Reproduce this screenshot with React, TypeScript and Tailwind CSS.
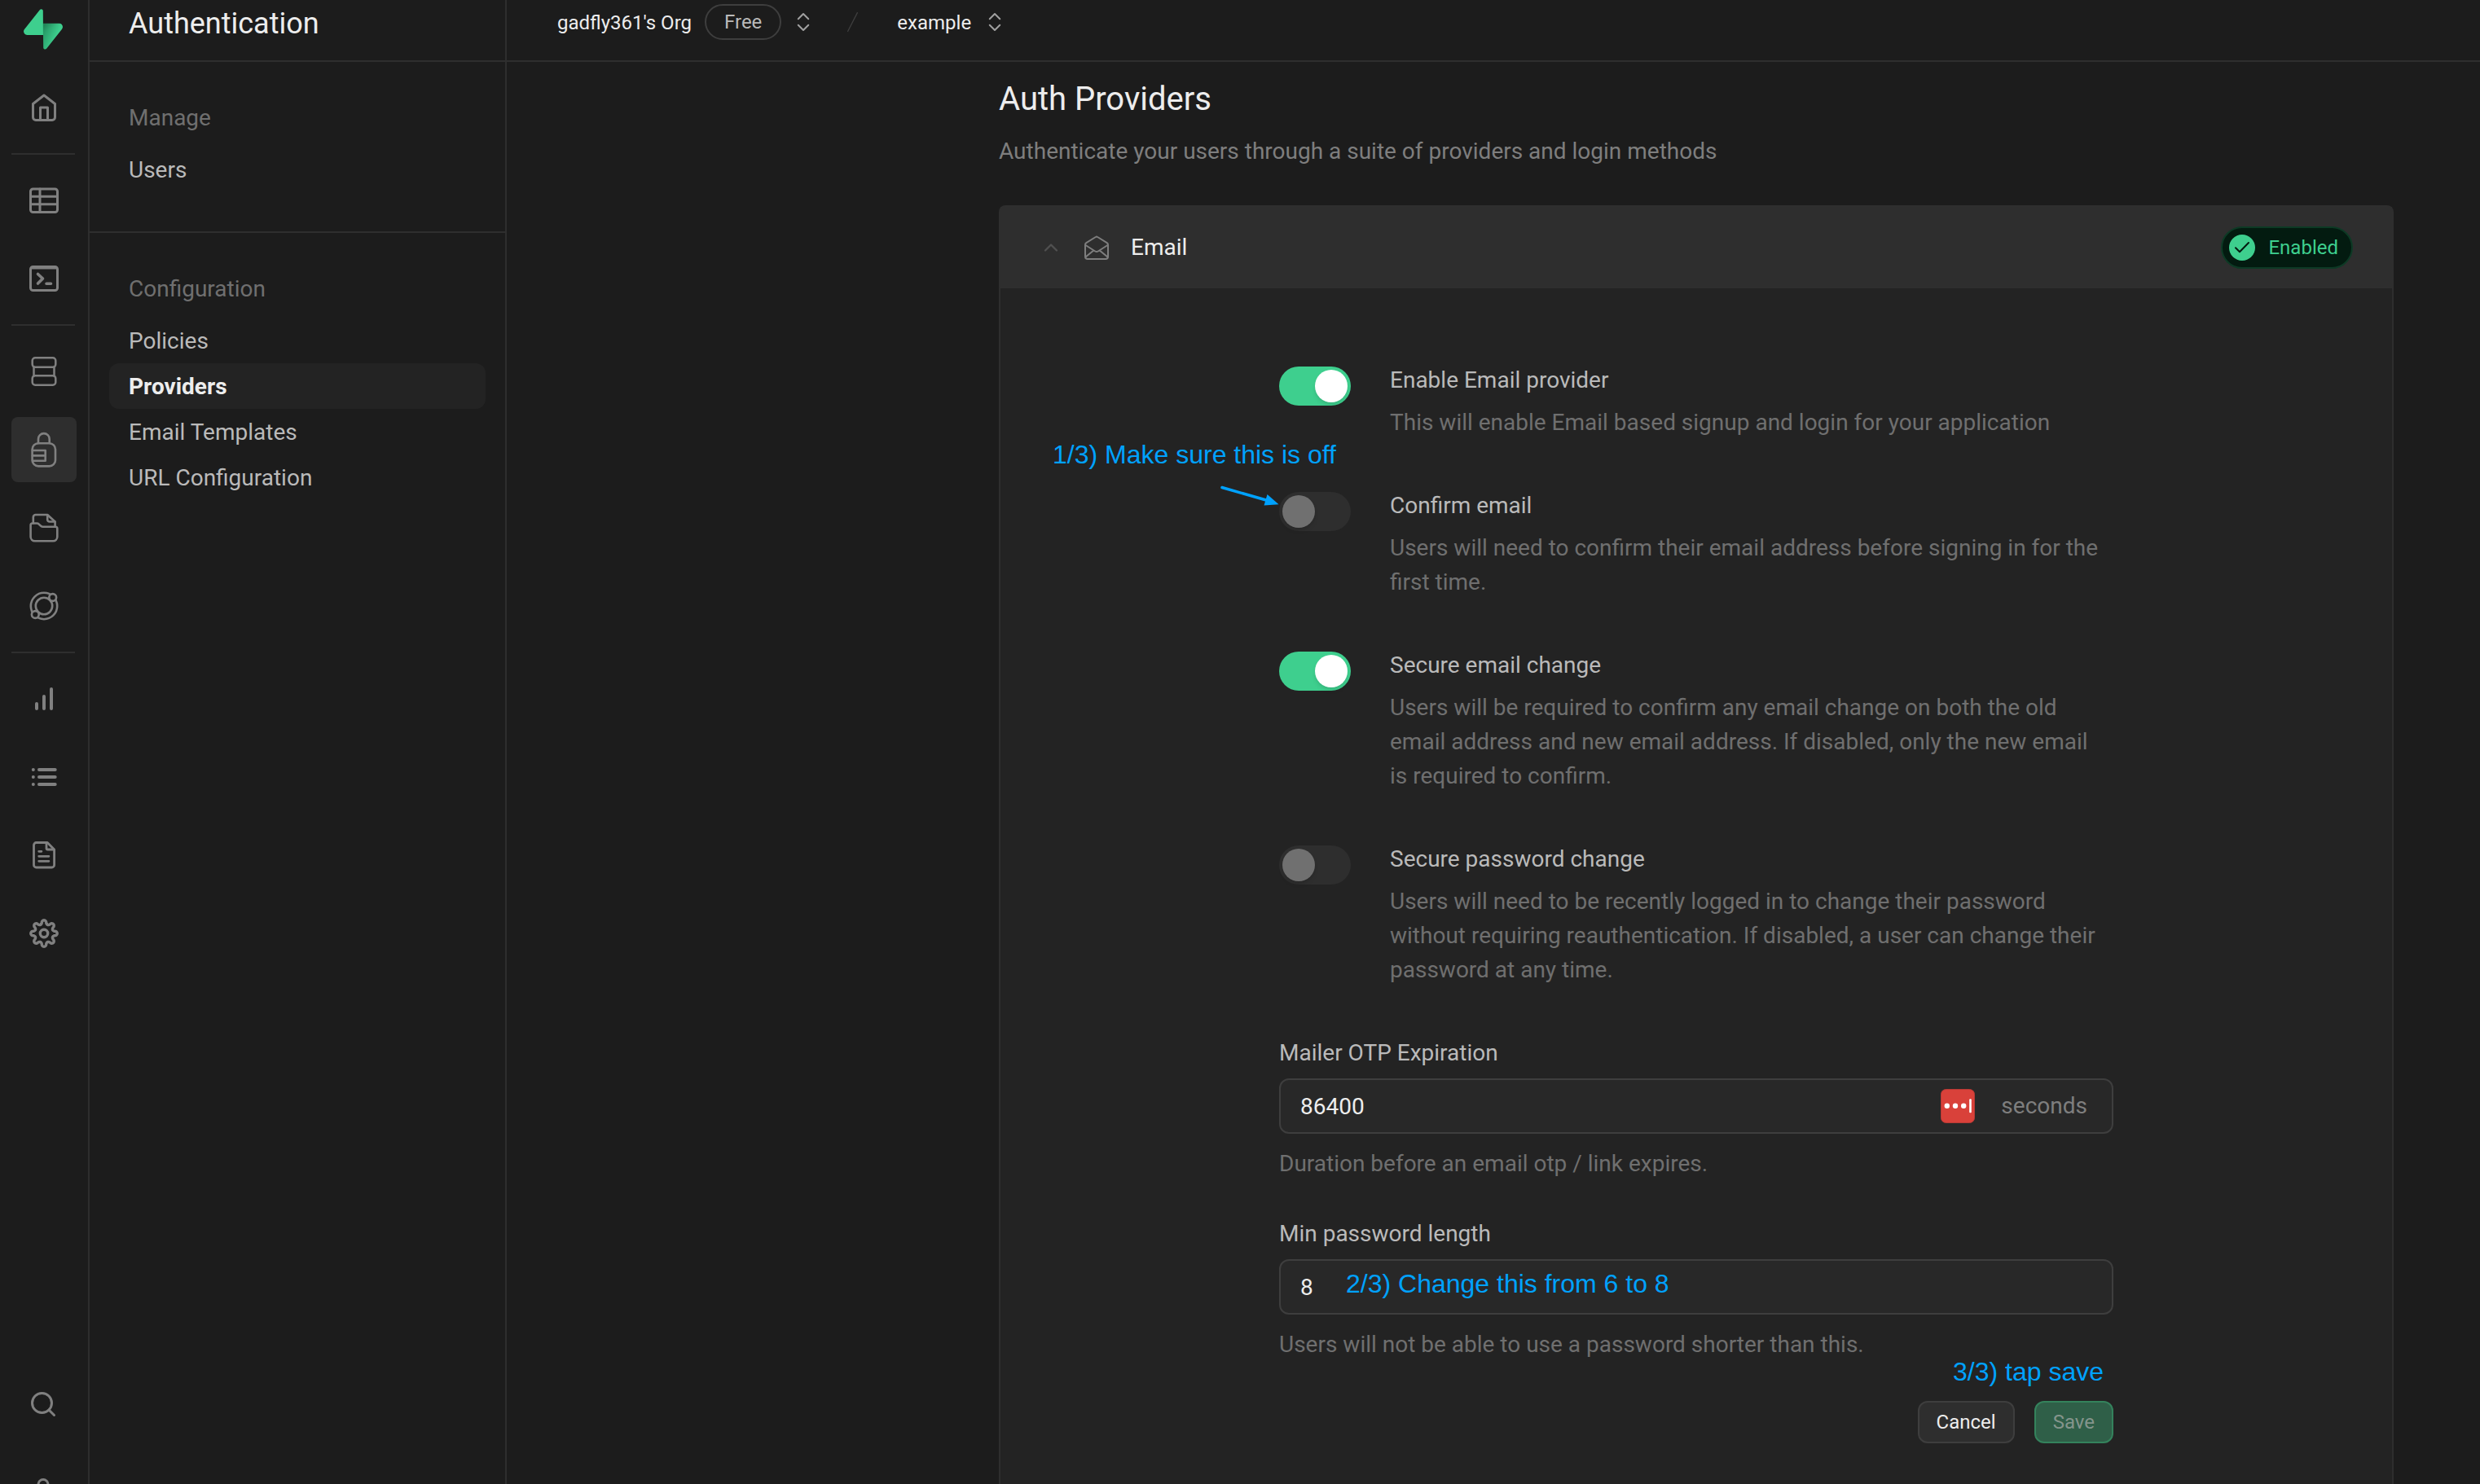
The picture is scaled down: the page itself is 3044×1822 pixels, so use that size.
import type { ReactNode } from "react";
import { ChevronUp, ChevronsUpDown, Search, User } from "lucide-react";

function Icon({ children, width = 3 }: { children: ReactNode; width?: number }) {
  return (
    <svg
      viewBox="0 0 44 44"
      className="size-11"
      fill="none"
      stroke="currentColor"
      strokeWidth={width}
      strokeLinecap="round"
      strokeLinejoin="round"
      aria-hidden="true"
    >
      {children}
    </svg>
  );
}

function gearPath() {
  const points: string[] = [];
  for (let i = 0; i < 240; i++) {
    const a = (i / 240) * Math.PI * 2;
    const c = Math.cos(8 * a);
    const r = 13.8 + 2.4 * Math.sign(c) * Math.pow(Math.abs(c), 0.6);
    points.push((22 + r * Math.cos(a)).toFixed(2) + " " + (22 + r * Math.sin(a)).toFixed(2));
  }
  return "M" + points.join("L") + "Z";
}

const railGroups: { label: string; active?: boolean; icon: ReactNode }[][] = [
  [
    {
      label: "Home",
      icon: (
        <Icon>
          <path d="M8.5 17.5 22 7l13.5 10.5V34a3.5 3.5 0 0 1-3.5 3.5H12A3.5 3.5 0 0 1 8.5 34Z" />
          <path d="M17.5 37.5V22h9v15.5" />
        </Icon>
      ),
    },
  ],
  [
    {
      label: "Table Editor",
      icon: (
        <Icon>
          <rect x="5.5" y="8" width="33" height="28.5" rx="3" />
          <path d="M17 8v28.5M5.5 17.3h33M5.5 26.7h33" />
        </Icon>
      ),
    },
    {
      label: "SQL Editor",
      icon: (
        <Icon>
          <rect x="5.5" y="7.5" width="33" height="29" rx="3" />
          <path d="M6.500 9h31" />
          <path d="m14.500 16.500 6 5.500-6 6M25 28.300h5.500" strokeWidth="3.6" />
        </Icon>
      ),
    },
  ],
  [
    {
      label: "Database",
      icon: (
        <Icon width={2.5}>
          <rect x="7.7" y="5.3" width="28.6" height="11.5" rx="3.5" />
          <rect x="7.7" y="27.2" width="28.6" height="11.5" rx="3.5" />
          <path d="M9.500 17v10.200M34.500 17v10.200" />
        </Icon>
      ),
    },
    {
      label: "Authentication",
      active: true,
      icon: (
        <Icon width={2.6}>
          <rect x="7.6" y="14.2" width="28.4" height="28.2" rx="7.5" />
          <path d="M15 14V9a6.850 6.850 0 0 1 13.700 0v5" />
          <path d="M8 23h15.700v12.700H8M8 29.400h15.700" />
        </Icon>
      ),
    },
    {
      label: "Storage",
      icon: (
        <Icon width={2.6}>
          <path d="M5.600 18.700a2.200 2.200 0 0 1 2.200-2.200h5.400c1 0 1.900.4 2.600 1.100l1.600 1.600c.8.9 1.900 1.500 3.100 1.500h15.600a2.200 2.200 0 0 1 2.200 2.200v10.200a5.200 5.200 0 0 1-5.200 5.200H10.800a5.200 5.200 0 0 1-5.200-5.200Z" />
          <path d="M8.800 16.200V8.900a2.900 2.900 0 0 1 2.900-2.900h14.500l9.400 8.500v6" />
          <path d="M26.200 6.500v5.400a2.600 2.600 0 0 0 2.600 2.600h6.500" />
        </Icon>
      ),
    },
    {
      label: "Edge Functions",
      icon: (
        <Icon width={2.6}>
          <circle cx="22" cy="22" r="16.2" />
          <circle cx="22" cy="22" r="10.2" />
          <circle cx="32.7" cy="11.5" r="4.4" fill="#1c1c1c" />
          <circle cx="11.3" cy="32.5" r="4.4" fill="#1c1c1c" />
        </Icon>
      ),
    },
  ],
  [
    {
      label: "Reports",
      icon: (
        <Icon width={4}>
          <path d="M13 28v6M22 19v15M31 10v24" />
        </Icon>
      ),
    },
    {
      label: "Logs",
      icon: (
        <Icon width={4}>
          <path d="M8.800 13h.01M8.800 22h.01M8.800 31h.01M16 13h19.700M16 22h19.700M16 31h19.700" />
        </Icon>
      ),
    },
    {
      label: "API Docs",
      icon: (
        <Icon width={2.8}>
          <path d="M12.500 6.500h13.700l8.400 8.400V34a3 3 0 0 1-3 3H12.500a3 3 0 0 1-3-3V9.500a3 3 0 0 1 3-3Z" />
          <path d="M25 7v6.500a1.500 1.500 0 0 0 1.500 1.500H34M15.700 17.300h3.200M15.700 23.300h12.200M15.700 29.300h12.200" />
        </Icon>
      ),
    },
    {
      label: "Project Settings",
      icon: (
        <Icon width={3.4}>
          <path d={gearPath()} />
          <circle cx="22" cy="22" r="4.7" />
        </Icon>
      ),
    },
  ],
];

function Logo() {
  return (
    <svg viewBox="0 0 109 113" className="h-[50px] w-12" fill="none" role="img" aria-label="Supabase">
      <defs>
        <linearGradient id="bolt" x1="53.974" y1="54.974" x2="94.163" y2="71.829" gradientUnits="userSpaceOnUse">
          <stop stopColor="#249361" />
          <stop offset="1" stopColor="#3ecf8e" />
        </linearGradient>
        <linearGradient id="shade" x1="36.156" y1="30.578" x2="54.484" y2="65.081" gradientUnits="userSpaceOnUse">
          <stop />
          <stop offset="1" stopOpacity="0" />
        </linearGradient>
      </defs>
      <path
        d="M63.708 110.284c-2.860 3.601-8.658 1.628-8.727-2.970l-1.007-67.251h45.220c8.190 0 12.758 9.460 7.665 15.874L63.708 110.284Z"
        fill="url(#bolt)"
      />
      <path
        d="M63.708 110.284c-2.860 3.601-8.658 1.628-8.727-2.970l-1.007-67.251h45.220c8.190 0 12.758 9.460 7.665 15.874L63.708 110.284Z"
        fill="url(#shade)"
        fillOpacity="0.2"
      />
      <path
        d="M45.317 2.071c2.860-3.601 8.657-1.628 8.726 2.970l.442 67.251H9.831c-8.190 0-12.759-9.460-7.665-15.875L45.317 2.071Z"
        fill="#3ecf8e"
      />
    </svg>
  );
}

function Rail() {
  return (
    <aside className="flex w-[110px] shrink-0 flex-col border-r-2 border-[#2e2e2e] px-3.5 text-[#808080]">
      <a href="#" className="flex h-[76px] shrink-0 items-center pb-1 pl-[15px]">
        <Logo />
      </a>
      <nav className="flex flex-col pt-4" aria-label="Project">
        {railGroups.map((group, i) => (
          <div key={i} className="flex flex-col">
            {i > 0 && <hr className="my-4 mr-0.5 border-0 border-t-2 border-[#2e2e2e]" />}
            <div className="flex flex-col gap-4">
              {group.map((item) => (
                <a
                  key={item.label}
                  href="#"
                  aria-label={item.label}
                  aria-current={item.active ? "page" : undefined}
                  className={
                    item.active
                      ? "flex size-20 items-center justify-center rounded-lg bg-[#2e2e2e]"
                      : "flex size-20 items-center justify-center rounded-lg"
                  }
                >
                  {item.icon}
                </a>
              ))}
            </div>
          </div>
        ))}
      </nav>
      <div className="mt-auto flex h-[116px] flex-col items-center gap-[70px] overflow-hidden pr-0.5">
        <button type="button" aria-label="Search">
          <Search className="size-9" />
        </button>
        <button type="button" aria-label="Account">
          <User className="size-9" />
        </button>
      </div>
    </aside>
  );
}

function MenuSection({ title, items, active }: { title: string; items: string[]; active?: string }) {
  return (
    <section className="px-6 py-12">
      <h2 className="mb-4 px-6 pt-0.5 text-[28px] leading-[38px] text-[#6f6f6f]">{title}</h2>
      <ul>
        {items.map((item) => (
          <li key={item}>
            <a
              href="#"
              className={
                item === active
                  ? "flex h-14 items-center rounded-xl bg-[#232323] px-6 pt-0.5 text-[28px] font-bold text-[#ededed]"
                  : "flex h-14 items-center rounded-xl px-6 pt-0.5 text-[28px] text-[#bababa]"
              }
            >
              {item}
            </a>
          </li>
        ))}
      </ul>
    </section>
  );
}

function Menu() {
  return (
    <aside className="w-[512px] shrink-0 border-r-2 border-[#2e2e2e]">
      <div className="flex h-[76px] items-center border-b-2 border-[#2e2e2e] px-12 pb-4">
        <h1 className="text-4xl text-[#ededed]">Authentication</h1>
      </div>
      <MenuSection title="Manage" items={["Users"]} />
      <hr className="border-0 border-t-2 border-[#2e2e2e]" />
      <MenuSection
        title="Configuration"
        items={["Policies", "Providers", "Email Templates", "URL Configuration"]}
        active="Providers"
      />
    </aside>
  );
}

function TopBar() {
  return (
    <header className="flex h-[76px] items-center border-b-2 border-[#2e2e2e] px-[62px] pb-5 text-2xl text-[#ededed]">
      <button type="button" className="flex items-center">
        <span className="pt-0.5">gadfly361's Org</span>
        <span className="ml-4 flex h-11 items-center rounded-full border-2 border-[#3e3e3e] px-[22px] text-[#bababa]">
          Free
        </span>
        <ChevronsUpDown className="ml-3 size-[30px] text-[#a0a0a0]" strokeWidth={1.6} />
      </button>
      <svg viewBox="0 0 24 24" className="ml-[30px] size-8" fill="none" stroke="#3e3e3e" strokeLinecap="round" aria-hidden="true">
        <path d="M16 3.500 7.200 20.600" />
      </svg>
      <button type="button" className="ml-[38px] flex items-center">
        <span className="pt-0.5">example</span>
        <ChevronsUpDown className="ml-3.5 size-[30px] text-[#a0a0a0]" strokeWidth={1.6} />
      </button>
    </header>
  );
}

function MailIcon() {
  return (
    <svg
      viewBox="0 0 32 32"
      className="size-8"
      fill="none"
      stroke="currentColor"
      strokeWidth="2"
      strokeLinecap="round"
      strokeLinejoin="round"
      aria-hidden="true"
    >
      <path d="M2 12.500c0-1 .5-1.900 1.300-2.400L14.800 3a2.200 2.200 0 0 1 2.400 0l11.500 7.100c.8.500 1.300 1.400 1.300 2.400V27a3 3 0 0 1-3 3H5a3 3 0 0 1-3-3Z" />
      <path d="m2.500 13 11.700 7.500a3.300 3.300 0 0 0 3.600 0L29.500 13M2.500 27.500l9.500-7.800M29.500 27.500 20 19.700" />
    </svg>
  );
}

function Annotation({ className, children }: { className: string; children: ReactNode }) {
  return (
    <span
      className={
        "pointer-events-none absolute font-['Liberation_Sans',sans-serif] text-[32px] leading-10 whitespace-nowrap text-[#00a2ff] " +
        className
      }
    >
      {children}
    </span>
  );
}

function Toggle({
  id,
  label,
  description,
  on,
  children,
}: {
  id: string;
  label: string;
  description: string;
  on?: boolean;
  children?: ReactNode;
}) {
  return (
    <div className="relative flex gap-12">
      <input
        id={id}
        type="checkbox"
        role="switch"
        defaultChecked={on}
        aria-describedby={id + "-help"}
        className="mt-1 flex h-12 w-[88px] shrink-0 appearance-none items-center rounded-full bg-[#2e2e2e] px-1 before:size-10 before:rounded-full before:bg-[#707070] before:shadow-md before:content-[''] checked:justify-end checked:bg-[#3ecf8e] checked:before:bg-white"
      />
      <div className="pr-2">
        <label htmlFor={id} className="block pt-0.5 text-[28px] leading-[38px] text-[#bababa]">
          {label}
        </label>
        <p id={id + "-help"} className="mt-3 text-[28px] leading-[42px] text-[#6f6f6f]">
          {description}
        </p>
      </div>
      {children}
    </div>
  );
}

function Field({
  id,
  label,
  value,
  help,
  children,
}: {
  id: string;
  label: string;
  value: string;
  help: string;
  children?: ReactNode;
}) {
  return (
    <div>
      <label htmlFor={id} className="block pt-0.5 text-[28px] leading-[38px] text-[#bababa]">
        {label}
      </label>
      <div className="relative mt-3 flex h-[68px] items-center rounded-xl border-2 border-[#3e3e3e] bg-[#282828] pr-[30px]">
        <input
          id={id}
          type="text"
          inputMode="numeric"
          defaultValue={value}
          aria-describedby={id + "-help"}
          className="h-full min-w-0 flex-1 bg-transparent pl-6 text-[28px] text-[#ededed] outline-none"
        />
        {children}
      </div>
      <p id={id + "-help"} className="mt-4 text-[28px] leading-[42px] text-[#6f6f6f]">
        {help}
      </p>
    </div>
  );
}

function EmailForm() {
  return (
    <form className="mx-auto flex max-w-[1024px] flex-col gap-[60px] pt-[92px] pb-24">
      <Toggle
        id="enable-email"
        on
        label="Enable Email provider"
        description="This will enable Email based signup and login for your application"
      />
      <Toggle
        id="confirm-email"
        label="Confirm email"
        description="Users will need to confirm their email address before signing in for the first time."
      >
        <Annotation className="-top-[62px] right-full -mr-[70px]">1/3) Make sure this is off</Annotation>
        <svg viewBox="0 0 72 30" className="absolute -top-1.5 right-full h-[30px] w-[72px]" aria-hidden="true">
          <path d="M2 4.500 56 20" stroke="#00a2ff" strokeWidth="3.5" strokeLinecap="round" />
          <path d="m57.500 13 14 12.200-18 1.300Z" fill="#00a2ff" />
        </svg>
      </Toggle>
      <Toggle
        id="secure-email"
        on
        label="Secure email change"
        description="Users will be required to confirm any email change on both the old email address and new email address. If disabled, only the new email is required to confirm."
      />
      <Toggle
        id="secure-password"
        label="Secure password change"
        description="Users will need to be recently logged in to change their password without requiring reauthentication. If disabled, a user can change their password at any time."
      />
      <div className="flex flex-col gap-11">
        <Field
          id="otp-expiration"
          label="Mailer OTP Expiration"
          value="86400"
          help="Duration before an email otp / link expires."
        >
          <svg viewBox="0 0 42 42" className="size-[42px] shrink-0" aria-hidden="true">
            <rect x="0.5" y="0.5" width="41" height="41" rx="6" fill="#d9413a" stroke="#b93a35" />
            <g fill="#fff">
              <circle cx="7.8" cy="20.7" r="3.2" />
              <circle cx="18" cy="20.7" r="3.2" />
              <circle cx="28.2" cy="20.7" r="3.2" />
              <rect x="35.2" y="12.3" width="2.6" height="17" rx="1" />
            </g>
          </svg>
          <span className="ml-8 text-[28px] text-[#7e7e7e]">seconds</span>
        </Field>
        <Field
          id="min-password"
          label="Min password length"
          value="8"
          help="Users will not be able to use a password shorter than this."
        >
          <Annotation className="top-2 left-20">2/3) Change this from 6 to 8</Annotation>
        </Field>
      </div>
      <div className="relative -mt-3 flex justify-end gap-6 text-2xl">
        <Annotation className="-top-14 right-3">3/3) tap save</Annotation>
        <button
          type="button"
          className="h-[52px] rounded-xl border-2 border-[#3e3e3e] bg-[#2e2e2e] px-[21px] text-[#ededed]"
        >
          Cancel
        </button>
        <button
          type="submit"
          disabled
          className="h-[52px] rounded-xl border-2 border-[#34825c] bg-[#2f5f48] px-[21px] text-[#84958c]"
        >
          Save
        </button>
      </div>
    </form>
  );
}

function ProviderCard() {
  return (
    <section className="mt-[46px] rounded-lg border-2 border-[#2e2e2e] bg-[#232323]">
      <div className="flex h-[100px] items-center bg-[#2e2e2e] px-12">
        <button type="button" aria-expanded="true" className="flex items-center gap-6.5 text-[28px] text-[#ededed]">
          <ChevronUp className="size-7 text-[#505050]" />
          <span className="text-[#7e7e7e]">
            <MailIcon />
          </span>
          <span>Email</span>
        </button>
        <span className="ml-auto flex h-[52px] items-center gap-4 rounded-full border-2 border-[#0d3a25] bg-[#031b10] pr-4 pl-2 text-2xl text-[#3ecf8e]">
          <svg viewBox="0 0 32 32" className="size-8" fill="none" aria-hidden="true">
            <circle cx="16" cy="16" r="16" fill="#3ecf8e" />
            <path d="m8 16.300 5 5 11-11.300" stroke="#031b10" strokeWidth="2" strokeLinecap="round" strokeLinejoin="round" />
          </svg>
          Enabled
        </span>
      </div>
      <EmailForm />
    </section>
  );
}

export default function App() {
  return (
    <div className="flex h-screen overflow-hidden bg-[#1c1c1c] font-['Roboto',sans-serif]">
      <Rail />
      <Menu />
      <div className="min-w-0 flex-1">
        <TopBar />
        <main className="mr-[106px] ml-[604px] pt-[18px]">
          <h2 className="text-[40px] leading-[56px] text-[#ededed]">Auth Providers</h2>
          <p className="mt-4 text-[28px] leading-10 text-[#7e7e7e]">
            Authenticate your users through a suite of providers and login methods
          </p>
          <ProviderCard />
        </main>
      </div>
    </div>
  );
}
